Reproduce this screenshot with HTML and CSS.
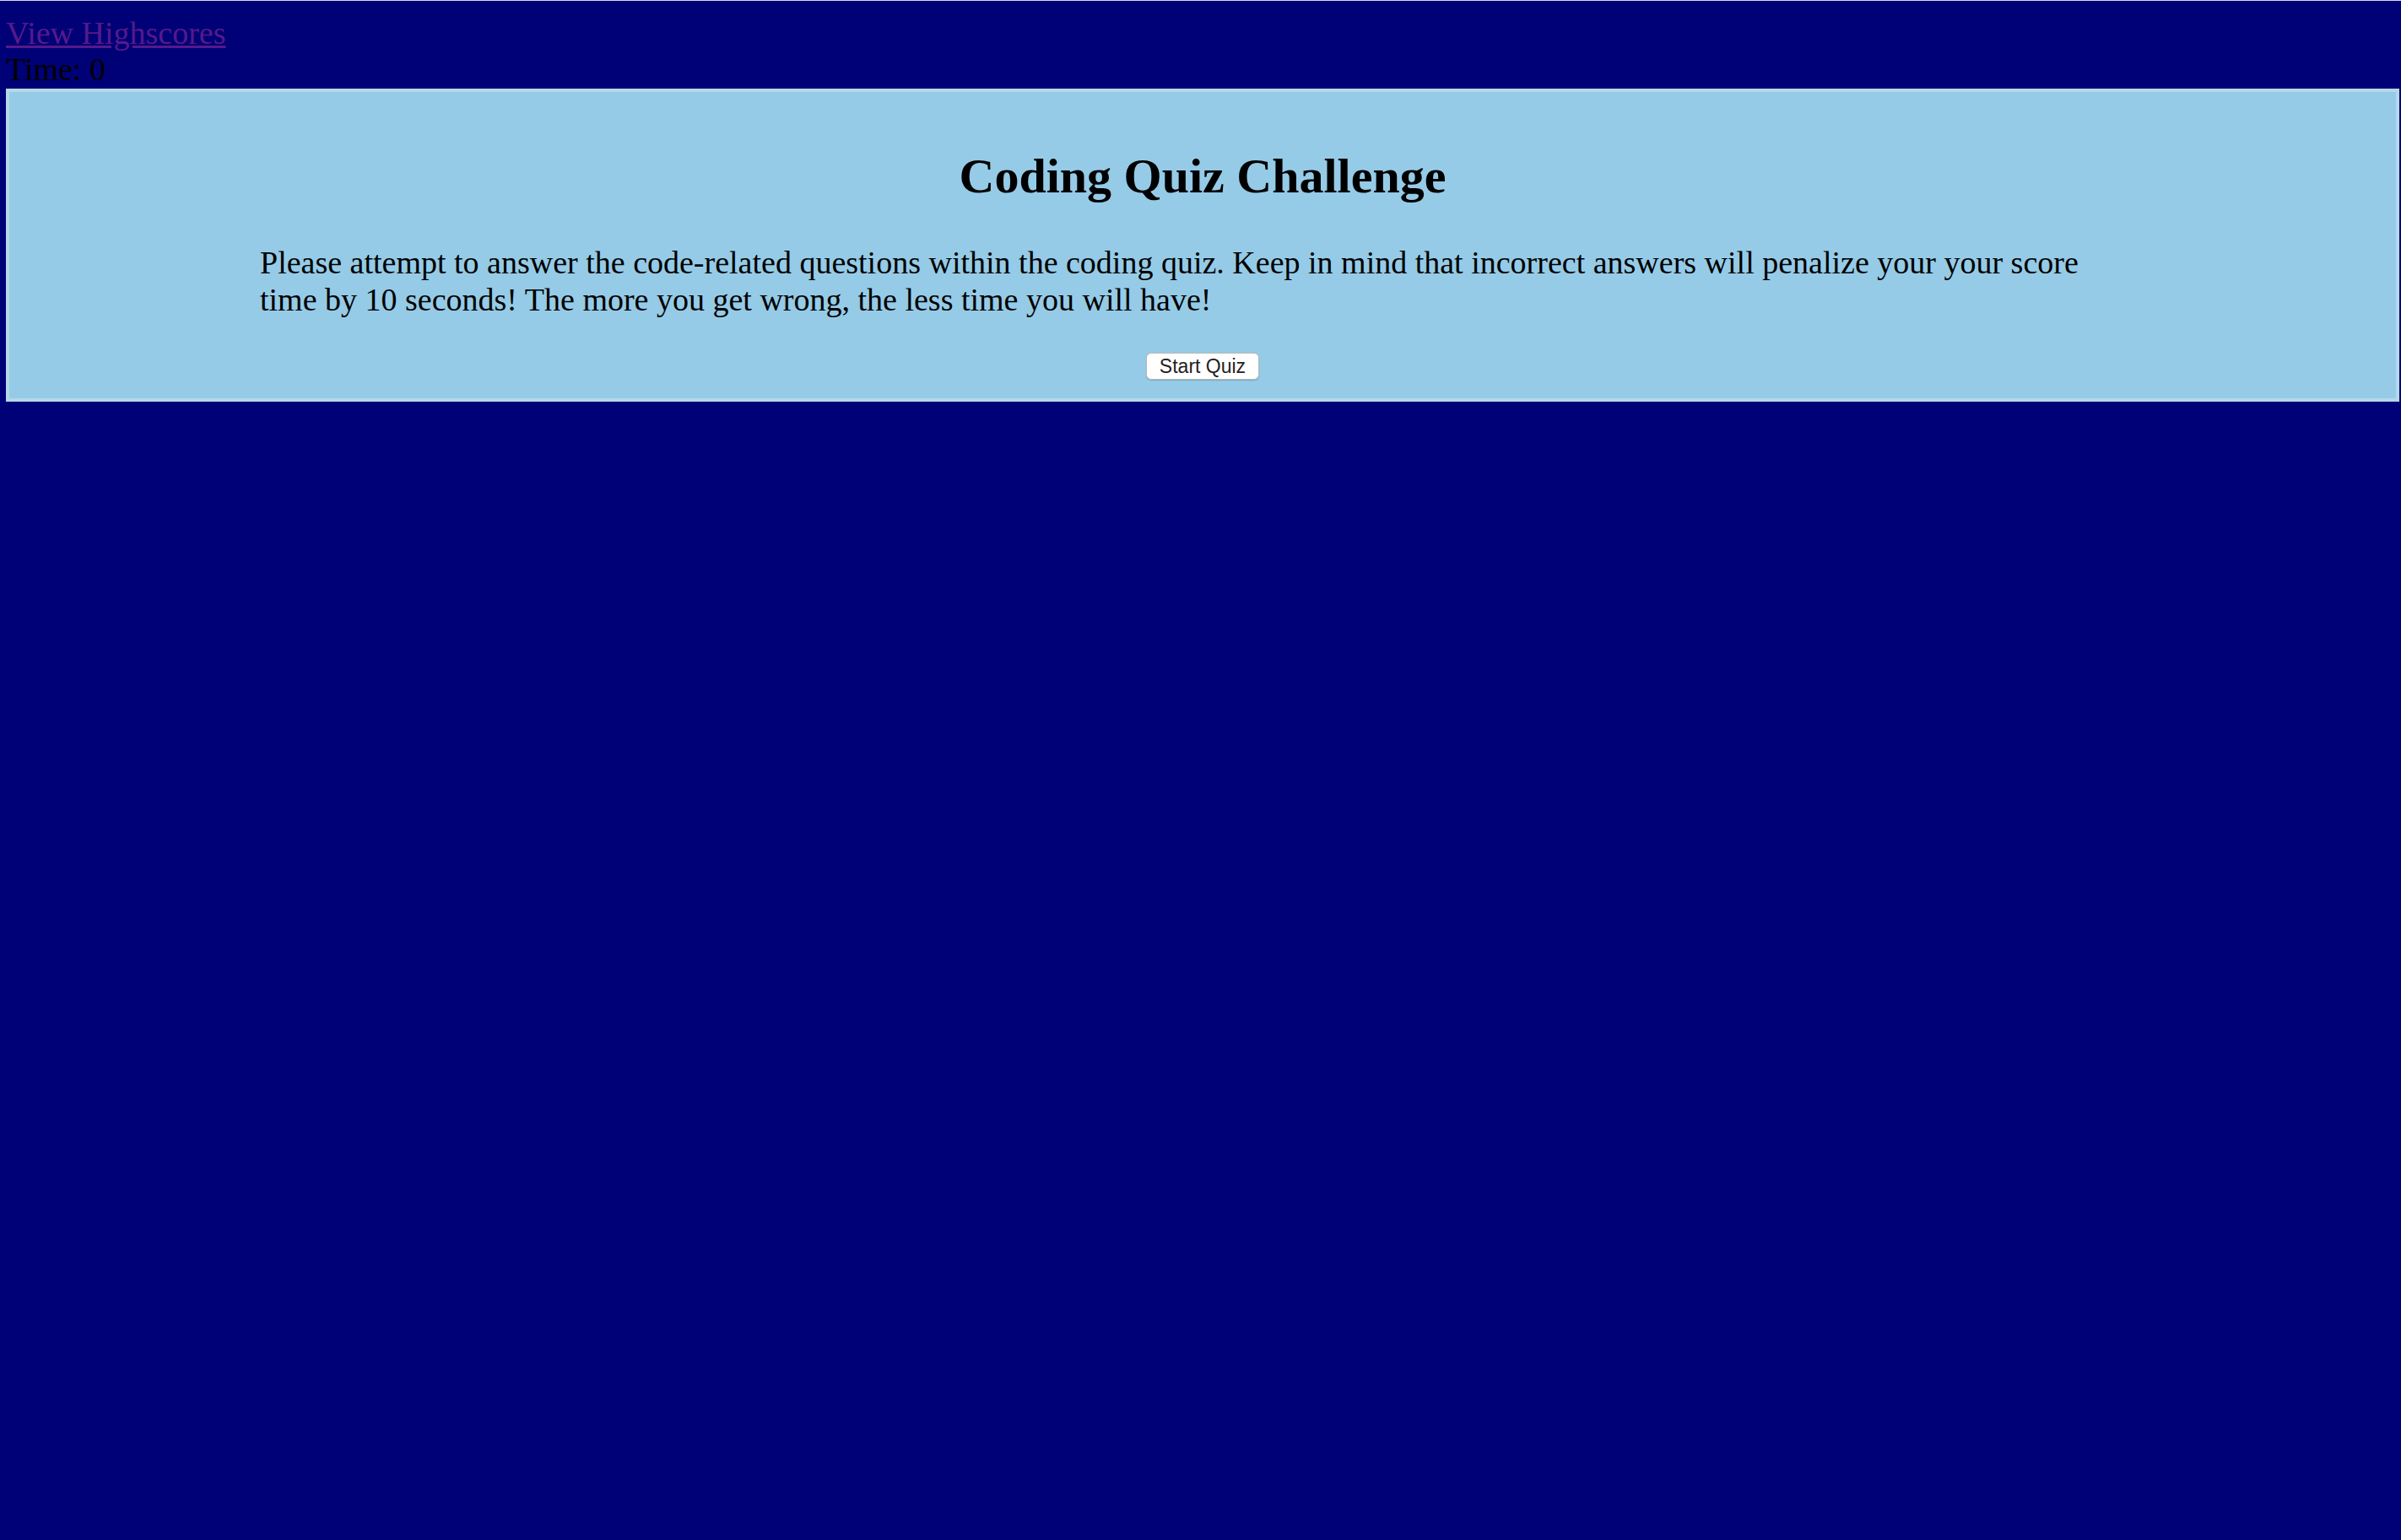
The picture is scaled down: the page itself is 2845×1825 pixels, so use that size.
FILE: index.html
```html
<!DOCTYPE html>
<html lang="en">
<head>
<meta charset="utf-8">
<title>Coding Quiz Challenge</title>
<link rel="stylesheet" href="styles.css">
</head>
<body>
<header class="topbar">
  <a class="scores-link" href="#">View Highscores</a>
  <div class="timer">Time: 0</div>
</header>
<main class="quiz-card">
  <h1 class="quiz-title">Coding Quiz Challenge</h1>
  <p class="quiz-intro">Please attempt to answer the code-related questions within the coding quiz. Keep in mind that incorrect answers will penalize your your score time by 10 seconds! The more you get wrong, the less time you will have!</p>
  <button class="start-btn" type="button">Start Quiz</button>
</main>
</body>
</html>
```
FILE: styles.css
```css
html {
  background: #000077;
  border-top: 1px solid #d8d8e0;
  min-height: 100%;
}

body {
  margin: 17px 2px 0 7px;
  font-family: "Liberation Serif", "Times New Roman", serif;
  font-size: 38px;
  color: #000;
}

.topbar {
  line-height: 43px;
}

.scores-link {
  color: #551a8b;
  text-decoration: underline;
}

.timer {
  color: #000;
}

.quiz-card {
  margin-top: 1px;
  background: #95cbe7;
  border: 4px solid #b4d8e7;
  text-align: center;
}

.quiz-title {
  margin: 67px 0 47px;
  font-size: 58px;
  line-height: 66px;
  font-weight: bold;
}

.quiz-intro {
  margin: 0 320px 41px 297px;
  text-align: left;
  line-height: 44px;
}

.start-btn {
  display: block;
  margin: 0 auto 22px;
  height: 32px;
  padding: 0 15px;
  background: #ffffff;
  border: 1px solid #b8b8b8;
  border-radius: 6px;
  box-shadow: 0 1px 1px rgba(0, 0, 0, 0.18);
  font-family: "Liberation Sans", Arial, sans-serif;
  font-size: 23px;
  line-height: 30px;
  color: #222;
}
```
